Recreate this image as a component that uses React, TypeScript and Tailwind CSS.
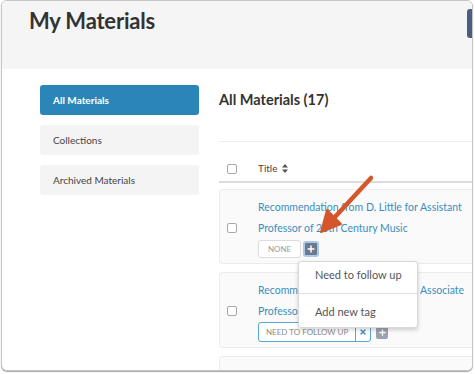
import { Plus, X } from 'lucide-react';

const SortIcon = () => (
  <svg width="6" height="9" viewBox="0 0 6 9" className="ml-[4px]">
    <path d="M3 0 L6 3.5 H0 Z M3 9 L0 5.5 H6 Z" fill="#555" />
  </svg>
);

const Checkbox = () => <div className="w-[10px] h-[10px] border border-[#a9a9a9] rounded-[2px] bg-white shrink-0" />;

const Arrow = () => (
  <svg className="absolute left-0 top-0 pointer-events-none" width="475" height="374">
    <line x1="371" y1="178" x2="334" y2="218" stroke="#d5562b" strokeWidth="4.5" strokeLinecap="round" />
    <polygon points="321,232 341,224 327,210" fill="#d5562b" stroke="#d5562b" strokeWidth="2" strokeLinejoin="round" />
  </svg>
);

const MaterialCard = ({ line1, line2, children }: { line1: string; line2: string; children?: React.ReactNode }) => (
  <div className="flex items-center bg-[#fafafa] border border-[#ececec] rounded-[3px] pl-[7px] pt-[7px] pb-[5px] w-[300px]">
    <Checkbox />
    <div className="ml-[21px] flex flex-col">
      <div className="text-[10.5px] leading-[21px] text-[#3b8dbd] whitespace-nowrap">{line1}</div>
      <div className="text-[10.5px] leading-[21px] text-[#3b8dbd] whitespace-nowrap">{line2}</div>
      {children}
    </div>
  </div>
);

export default function App() {
  return (
    <div className="relative w-[475px] h-[374px] bg-white font-['Lato',sans-serif]">
      <div className="ml-[1px] w-[472px] h-[371px] border border-[#c4c4c4] rounded-[6px] overflow-hidden shadow-[0_1px_1px_rgba(0,0,0,0.35)] bg-white">
        <div className="relative h-[68px] bg-[#f5f5f5]">
          <h1 className="pl-[27px] pt-[6px] text-[22px] font-bold text-[#333] leading-[28px] tracking-[-0.2px]">My Materials</h1>
          <div className="absolute right-0 top-[8px] w-[5px] h-[29px] rounded-l-[3px] bg-[#4a5e82]" />
        </div>
        <div className="flex">
          <div className="w-[197px] shrink-0 pl-[38px] pt-[16px] flex flex-col gap-[10px]">
            <div className="h-[30px] rounded-[3px] bg-[#2b86b8] text-white font-bold text-[10px] flex items-center pl-[13px]">All Materials</div>
            <div className="h-[30px] rounded-[3px] bg-[#f4f4f4] text-[#444] text-[10px] flex items-center pl-[13px]">Collections</div>
            <div className="h-[30px] rounded-[3px] bg-[#f4f4f4] text-[#444] text-[10px] flex items-center pl-[13px]">Archived Materials</div>
          </div>
          <div className="ml-[20px] flex-1 min-w-0">
            <div className="h-[73px] border-b border-[#ececec] pt-[20px]">
              <h2 className="text-[14.5px] font-bold text-[#333] leading-[22px]">All Materials (17)</h2>
            </div>
            <div className="h-[41px] border-b-2 border-[#dcdcdc] flex items-center pl-[8px] pt-[14px]">
              <Checkbox />
              <span className="ml-[21px] text-[10px] text-[#444]">Title</span>
              <SortIcon />
            </div>
            <div className="mt-[6px] flex flex-col gap-[8px]">
              <MaterialCard line1="Recommendation from D. Little for Assistant" line2="Professor of 20th Century Music">
                <div className="relative flex items-center mt-[1px]">
                  <div className="h-[18px] px-[9px] flex items-center border border-[#dcdcdc] rounded-[3px] bg-white text-[8px] text-[#9a9a9a] uppercase">None</div>
                  <div className="ml-[2px] w-[16px] h-[16px] rounded-[3px] border-2 border-[#a9c9ea] bg-[#6d788c] flex items-center justify-center">
                    <Plus size={10} strokeWidth={3.5} color="white" />
                  </div>
                  <div className="absolute z-10 left-[40px] top-[21px] w-[120px] bg-white border border-[#d8d8d8] rounded-[3px] shadow-[0_2px_4px_rgba(0,0,0,0.18)] text-[11px] text-[#555]">
                    <div className="h-[25px] leading-[25px] pl-[16px] mb-[6px]">Need to follow up</div>
                    <div className="h-px bg-[#e2e2e2]" />
                    <div className="h-[25px] leading-[25px] pl-[16px] mt-[5px] mb-[3px]">Add new tag</div>
                  </div>
                </div>
              </MaterialCard>
              <MaterialCard line1="Recommendation from D. Little for Associate" line2="Professor of Music Composition">
                <div className="flex items-center">
                  <div className="h-[20px] flex items-stretch border border-[#59a5d6] rounded-[3px] bg-white">
                    <div className="px-[7px] flex items-center text-[8px] text-[#8c8c8c] uppercase">Need to follow up</div>
                    <div className="w-[15px] border-l border-[#59a5d6] flex items-center justify-center">
                      <X size={8} strokeWidth={4} color="#3f8fc4" />
                    </div>
                  </div>
                  <div className="ml-[5px] w-[12px] h-[14px] rounded-[2px] bg-[#9aa3b1] flex items-center justify-center">
                    <Plus size={9} strokeWidth={3.5} color="white" />
                  </div>
                </div>
              </MaterialCard>
              <div className="h-[40px] w-[300px] bg-[#fafafa] border border-[#ececec] rounded-[3px]" />
            </div>
          </div>
        </div>
      </div>
      <Arrow />
    </div>
  );
}
